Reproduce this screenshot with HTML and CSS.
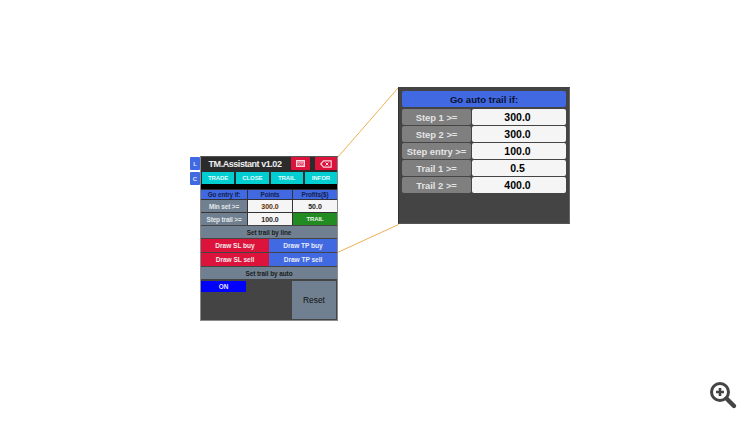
FILE: index.html
```html
<!DOCTYPE html>
<html lang="en">
<head>
<meta charset="utf-8">
<title>TM.Assistant</title>
<link rel="stylesheet" href="styles.css">
</head>
<body>
<div class="canvas">
  <svg class="leaders" width="750" height="422" viewBox="0 0 750 422">
    <line x1="337.5" y1="157.5" x2="398.5" y2="87.5"/>
    <line x1="337.5" y1="252.5" x2="398.5" y2="224.5"/>
  </svg>

  <div class="side">
    <div class="side-btn">L</div>
    <div class="side-btn">C</div>
  </div>

  <div class="panel">
    <div class="title-row">
      <div class="title">TM.Assistant v1.02</div>
      <div class="icon-btn icon-a">
        <svg width="9" height="8" viewBox="0 0 9 8"><rect x=".5" y=".5" width="8" height="6" fill="#ee8a9d" stroke="#f8d8de" stroke-width="1"/><path d="M1.5 5 L3.5 3.5 L5.5 5 L7.5 3.5" fill="none" stroke="#dc143c" stroke-width=".8"/></svg>
      </div>
      <div class="icon-btn icon-b">
        <svg width="12" height="8" viewBox="0 0 12 8"><path d="M.8 4 L3.5 .8 H11.2 V7.2 H3.5 Z" fill="none" stroke="#f7d5dc" stroke-width="1.2"/><path d="M5.5 2.5 L8.5 5.5 M8.5 2.5 L5.5 5.5" stroke="#f7d5dc" stroke-width="1"/></svg>
      </div>
    </div>
    <div class="tabs">
      <div class="tab">TRADE</div>
      <div class="tab">CLOSE</div>
      <div class="tab">TRAIL</div>
      <div class="tab">INFOR</div>
    </div>
    <div class="black-bar"></div>
    <div class="grid">
      <div class="cell head">Go entry if:</div>
      <div class="cell head">Points</div>
      <div class="cell head">Profits($)</div>
      <div class="cell label">Min set &gt;=</div>
      <div class="cell value orange">300.0</div>
      <div class="cell value">50.0</div>
      <div class="cell label">Step trail &gt;=</div>
      <div class="cell value">100.0</div>
      <div class="cell green">TRAIL</div>
    </div>
    <div class="section">Set trail by line</div>
    <div class="draw-row">
      <div class="draw red">Draw SL buy</div>
      <div class="draw blue">Draw TP buy</div>
    </div>
    <div class="draw-row">
      <div class="draw red">Draw SL sell</div>
      <div class="draw blue">Draw TP sell</div>
    </div>
    <div class="section">Set trail by auto</div>
    <div class="auto">
      <div class="on">ON</div>
      <div class="reset">Reset</div>
    </div>
  </div>

  <div class="zoomed">
    <div class="z-head">Go auto trail if:</div>
    <div class="z-row"><div class="z-label">Step 1 &gt;=</div><div class="z-value">300.0</div></div>
    <div class="z-row"><div class="z-label">Step 2 &gt;=</div><div class="z-value">300.0</div></div>
    <div class="z-row"><div class="z-label">Step entry &gt;=</div><div class="z-value">100.0</div></div>
    <div class="z-row"><div class="z-label">Trail 1 &gt;=</div><div class="z-value">0.5</div></div>
    <div class="z-row"><div class="z-label">Trail 2 &gt;=</div><div class="z-value">400.0</div></div>
  </div>

  <svg class="magnifier" width="32" height="32" viewBox="0 0 32 32">
    <circle cx="12" cy="12" r="8.5" fill="none" stroke="#444" stroke-width="3"/>
    <path d="M8 12 H16 M12 8 V16" stroke="#444" stroke-width="2.6"/>
    <path d="M18.5 18.5 L26 26" stroke="#444" stroke-width="4.4" stroke-linecap="round"/>
  </svg>
</div>
</body>
</html>
```

FILE: styles.css
```css
* { box-sizing: border-box; }
html, body { margin: 0; padding: 0; background: #fff; }
body { font-family: "Liberation Sans", Arial, sans-serif; overflow: hidden; }

.canvas { position: relative; width: 750px; height: 422px; }
.leaders { position: absolute; left: 0; top: 0; }
.leaders line { stroke: #eeb054; stroke-width: 1; }

.side { position: absolute; left: 190px; top: 157px; width: 10px; display: flex; flex-direction: column; gap: 2px; }
.side-btn { height: 13px; background: #4169e1; color: #dfe6fb; font-size: 6px; font-weight: bold; display: flex; align-items: center; justify-content: center; border-radius: 1px; }

.panel { position: absolute; left: 200px; top: 156px; width: 138px; height: 165px; background: #444; border: 1px solid #8c8c8c; border-top-color: #555; display: flex; flex-direction: column; }

.title-row { display: flex; height: 14px; background: #2b2b2b; gap: 5px; }
.title { flex: 1; color: #eee; font-size: 9px; font-weight: bold; display: flex; align-items: center; justify-content: center; padding-left: 3px; letter-spacing: -.45px; }
.icon-btn { background: #dc143c; display: flex; align-items: center; justify-content: center; height: 13px; }
.icon-a { width: 19px; }
.icon-b { width: 22px; }

.tabs { display: flex; gap: 2px; height: 13px; padding: 1px 0 0 1px; background: #2b2b2b; }
.tab { flex: 1; background: #00ced1; color: #e6fafa; font-size: 6px; font-weight: bold; display: flex; align-items: center; justify-content: center; letter-spacing: -.05px; }

.black-bar { height: 5px; background: #000; }

.grid { display: grid; grid-template-columns: 46px 44px 44px; grid-template-rows: 9px 12px 12px; gap: 1px; padding-top: 1px; background: #333; }
.cell { display: flex; align-items: center; justify-content: center; font-size: 6.4px; font-weight: bold; letter-spacing: -.12px; }
.head { background: #4169e1; color: #13204f; }
.label { background: #708090; color: #e3e7ea; }
.value { background: #f5f5f5; color: #1c1c1c; font-size: 7px; letter-spacing: 0; }
.orange { color: #5f2e00; }
.green { background: #228b22; color: #e8f5e8; font-size: 6px; letter-spacing: -.1px; }

.section { height: 13px; background: #708090; color: #1a1d20; font-size: 6.4px; font-weight: bold; display: flex; align-items: center; justify-content: center; border-top: 1px solid #444; letter-spacing: -.05px; }

.draw-row { display: flex; height: 14px; padding-top: 1px; background: #444; }
.draw { flex: 1; color: #f2e6ea; font-size: 6.6px; font-weight: bold; display: flex; align-items: center; justify-content: center; letter-spacing: -.05px; }
.red { background: #dc143c; }
.blue { background: #4169e1; color: #e6ebfb; }

.auto { flex: 1; display: flex; justify-content: space-between; align-items: flex-start; padding: 2px 1px 1px 0; background: #444; }
.on { width: 45px; height: 11px; background: #0000ff; color: #e6e6ff; font-size: 6.4px; font-weight: bold; display: flex; align-items: center; justify-content: center; }
.reset { width: 44px; height: 38px; background: #708090; color: #111; font-size: 8.4px; display: flex; align-items: center; justify-content: center; }

.zoomed { position: absolute; left: 398px; top: 87px; width: 172px; height: 137px; background: #444; border: 1px solid #666; border-top: 2px solid #444; border-left: 1px solid #333; border-bottom-color: #555; padding: 2px 3px 0 3px; display: flex; flex-direction: column; gap: 1px; }
.z-head { height: 16px; background: #4169e1; color: #0a1233; font-size: 9.6px; font-weight: bold; display: flex; align-items: center; justify-content: center; border-radius: 2px; margin-bottom: 1px; }
.z-row { display: flex; height: 16px; gap: 1px; }
.z-label { width: 69px; background: #7f7f7f; color: #e4e4e4; font-size: 9.4px; font-weight: bold; display: flex; align-items: center; justify-content: center; border-radius: 2px; white-space: nowrap; }
.z-value { flex: 1; background: #f5f5f5; color: #000; font-size: 10.5px; font-weight: bold; display: flex; align-items: center; justify-content: center; border-radius: 2px; padding-right: 3px; }

.magnifier { position: absolute; left: 708px; top: 380px; }
```
